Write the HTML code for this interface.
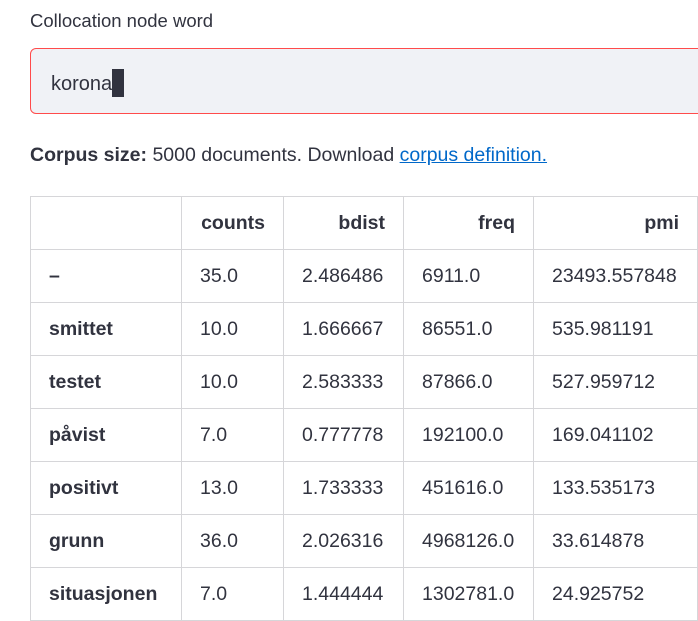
<!DOCTYPE html>
<html><head><meta charset="utf-8"><style>
body{margin:0;width:698px;height:621px;overflow:hidden;background:#fff;font-family:"Liberation Sans",sans-serif;color:#31333f;position:relative}
.lbl{position:absolute;left:30px;top:10px;font-size:18.5px}
.inp{position:absolute;left:30px;top:48px;width:680px;height:66px;border:1.5px solid #ff4b4b;border-radius:6px;background:#f0f2f6;box-sizing:border-box}
.inp span{position:absolute;left:20px;top:20px;font-size:20px}
.cur{display:inline-block;width:12px;height:28px;background:#31333f;vertical-align:-7px}
.cs{position:absolute;left:30px;top:144px;font-size:19.5px}
.cs a{color:#0068c9;text-decoration:underline}
table{position:absolute;left:30px;top:196px;border-collapse:collapse;font-size:19.5px}
td,th{border:1px solid #d6d6d9;height:53px;padding:0 18px;box-sizing:border-box;white-space:nowrap}
th{text-align:right;font-weight:bold}
tbody th{text-align:left}
td{text-align:left}
</style></head><body>
<div class="lbl">Collocation node word</div>
<div class="inp"><span>korona<i class="cur"></i></span></div>
<div class="cs"><b>Corpus size:</b> 5000 documents. Download <a>corpus definition.</a></div>
<table>
<colgroup><col style="width:151px"><col style="width:102px"><col style="width:120px"><col style="width:130px"><col style="width:164px"></colgroup>
<thead><tr><th></th><th>counts</th><th>bdist</th><th>freq</th><th>pmi</th></tr></thead>
<tbody>
<tr><th>–</th><td>35.0</td><td>2.486486</td><td>6911.0</td><td>23493.557848</td></tr>
<tr><th>smittet</th><td>10.0</td><td>1.666667</td><td>86551.0</td><td>535.981191</td></tr>
<tr><th>testet</th><td>10.0</td><td>2.583333</td><td>87866.0</td><td>527.959712</td></tr>
<tr><th>påvist</th><td>7.0</td><td>0.777778</td><td>192100.0</td><td>169.041102</td></tr>
<tr><th>positivt</th><td>13.0</td><td>1.733333</td><td>451616.0</td><td>133.535173</td></tr>
<tr><th>grunn</th><td>36.0</td><td>2.026316</td><td>4968126.0</td><td>33.614878</td></tr>
<tr><th>situasjonen</th><td>7.0</td><td>1.444444</td><td>1302781.0</td><td>24.925752</td></tr>
</tbody></table>
</body></html>
